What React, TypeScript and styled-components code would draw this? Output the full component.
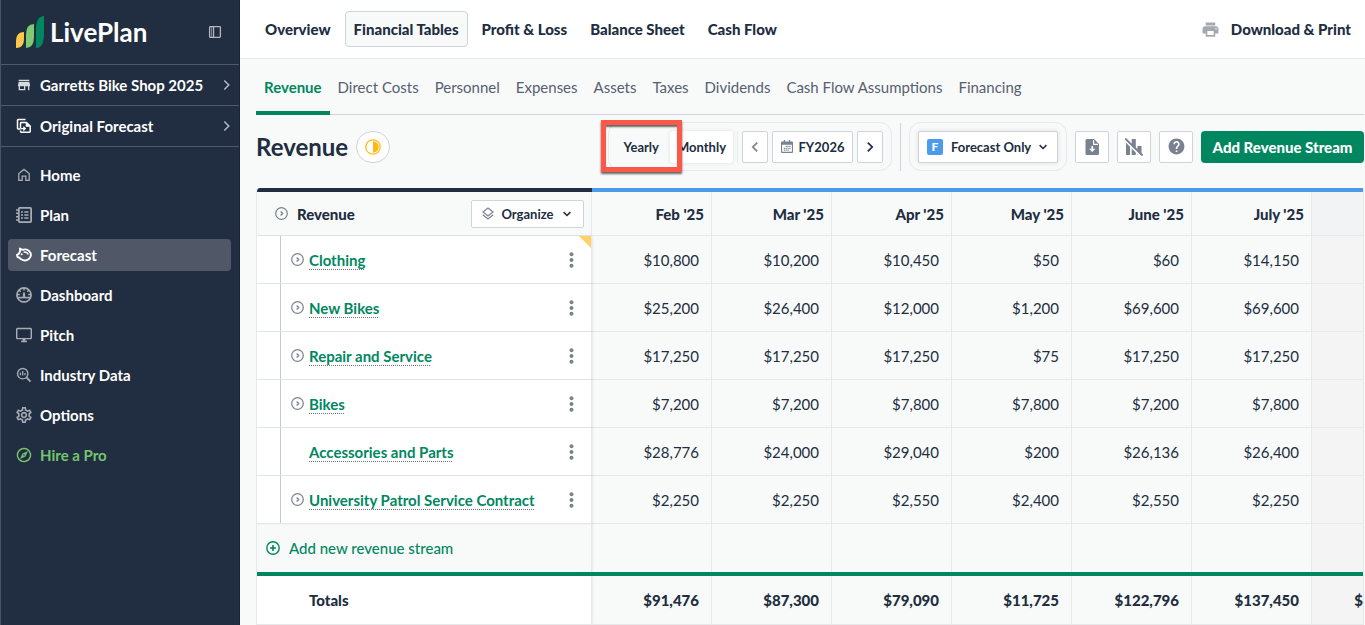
import React from "react";
import styled, { createGlobalStyle, css } from "styled-components";
import {
  MdStore,
  MdPrint,
  MdHelp,
  MdOutlineDesktopWindows,
  MdOutlineSettings,
  MdOutlineExplore,
} from "react-icons/md";

const navy = "#212d40";
const green = "#00875f";
const blue = "#4c9aec";
const page = "#f8faf9";
const line = "#e6e8ea";
const edge = "#cfd3da";
const muted = "#7a8290";

const GlobalStyle = createGlobalStyle`
  *, *::before, *::after { box-sizing: border-box; }
  body {
    margin: 0;
    background: ${page};
    color: ${navy};
    font-family: Lato, "Open Sans", sans-serif;
    font-size: 15px;
    line-height: 20px;
  }
  button, select { font: inherit; color: inherit; margin: 0; cursor: pointer; }
  a { color: inherit; text-decoration: none; }
  svg { display: block; flex: none; }
`;

const Shell = styled.div`
  display: flex;
  min-height: 100vh;
`;

/* ---------- Sidebar ---------- */

const Sidebar = styled.aside`
  flex: 0 0 240px;
  background: ${navy};
  border-left: 1px solid #485264;
  border-right: 1px solid #1a2434;
  color: #fff;
  font-weight: 700;
`;

const Brand = styled.div`
  display: flex;
  align-items: center;
  height: 64px;
  padding: 0 16px 0 15px;
`;

const BrandName = styled.span`
  flex: 1;
  margin-left: 6px;
  font-size: 26px;
  line-height: 32px;
`;

const CollapseButton = styled.button`
  padding: 0;
  border: 0;
  background: none;
  color: #b4b8c0;
`;

const Switcher = styled.a`
  display: flex;
  align-items: center;
  height: 41px;
  padding: 0 4px 0 15px;
  border-top: 1px solid #4f596a;
  span { flex: 1; margin-left: 8px; }
`;

const NavList = styled.nav`
  display: flex;
  flex-direction: column;
  gap: 8px;
  padding: 12px 8px 0 7px;
  border-top: 1px solid #4f596a;
`;

const NavItem = styled.a<{ $active?: boolean; $accent?: boolean }>`
  display: flex;
  align-items: center;
  gap: 8px;
  height: 32px;
  padding: 0 8px;
  border-radius: 4px;
  color: ${(p) => (p.$accent ? "#75c56b" : "#fff")};
  background: ${(p) => (p.$active ? "#505868" : "transparent")};
  svg { color: ${(p) => (p.$accent ? "#75c56b" : p.$active ? "#fff" : "#a6abb4")}; }
`;

/* ---------- Header ---------- */

const Content = styled.div`
  flex: 1;
  min-width: 0;
`;

const Header = styled.header`
  display: flex;
  align-items: center;
  justify-content: space-between;
  height: 59px;
  padding: 0 14px 0 16px;
  background: #fff;
  border-bottom: 1px solid ${line};
  font-weight: 900;
`;

const HeaderNav = styled.nav`
  display: flex;
  gap: 5px;
`;

const HeaderLink = styled.a<{ $active?: boolean }>`
  padding: 7px 8px;
  border: 1px solid ${(p) => (p.$active ? edge : "transparent")};
  border-radius: 4px;
  background: ${(p) => (p.$active ? page : "transparent")};
`;

const PrintLink = styled.a`
  display: flex;
  align-items: center;
  gap: 11px;
  svg { color: #a3a8b1; }
`;

const Main = styled.main`
  padding: 0 1px 0 16px;
`;

const Tabs = styled.nav`
  display: flex;
  height: 56px;
  border-bottom: 1px solid ${edge};
`;

const Tab = styled.a<{ $active?: boolean }>`
  height: 56px;
  padding: 18px 8px 0;
  color: #566070;
  ${(p) =>
    p.$active &&
    css`
      color: ${green};
      font-weight: 700;
      border-bottom: 4px solid ${green};
    `}
`;

/* ---------- Toolbar ---------- */

const TitleBar = styled.div`
  display: flex;
  align-items: center;
  justify-content: space-between;
  padding: 7px 0 17px;
`;

const TitleGroup = styled.div`
  display: flex;
  align-items: center;
  gap: 8px;
`;

const Title = styled.h1`
  margin: 0;
  font-size: 24px;
  line-height: 32px;
  font-weight: 700;
`;

const RoundButton = styled.button`
  display: grid;
  place-items: center;
  width: 34px;
  height: 32px;
  padding: 0;
  border: 1px solid ${edge};
  border-radius: 16px;
  background: #fff;
`;

const Tools = styled.div`
  display: flex;
  align-items: center;
  gap: 8px;
  font-size: 13px;
  font-weight: 700;
`;

const Group = styled.div`
  position: relative;
  display: flex;
  align-items: center;
  gap: 4px;
  height: 49px;
  padding: 0 8px;
  border: 1px solid ${line};
  border-radius: 12px;
`;

const Segment = styled.button<{ $active?: boolean }>`
  height: 32px;
  padding: 0 7px;
  border: 0;
  border-radius: 4px;
  background: ${(p) => (p.$active ? "#fff" : "transparent")};
  box-shadow: ${(p) => (p.$active ? "0 0 4px rgba(33, 45, 64, 0.12)" : "none")};
`;

const GroupRule = styled.span`
  width: 1px;
  height: 32px;
  background: ${line};
`;

const Rule = styled.span`
  width: 1px;
  height: 48px;
  background: ${edge};
`;

const BoxButton = styled.button<{ $width?: number; $soft?: boolean }>`
  display: flex;
  align-items: center;
  justify-content: center;
  gap: 6px;
  width: ${(p) => (p.$width ? `${p.$width}px` : "auto")};
  height: 32px;
  padding: 0;
  border: 1px solid ${edge};
  border-radius: 2px;
  background: #fff;
  color: ${(p) => (p.$soft ? muted : navy)};
`;

const SelectBox = styled.label`
  position: relative;
  display: flex;
  align-items: center;
  width: 140px;
  height: 32px;
  border: 1px solid ${edge};
  border-radius: 2px;
  background: #fff;
  box-shadow: 0 0 4px rgba(33, 45, 64, 0.14);
  select {
    width: 100%;
    height: 30px;
    padding: 0 24px 0 32px;
    border: 0;
    background: transparent;
    appearance: none;
  }
  svg {
    position: absolute;
    right: 8px;
    pointer-events: none;
  }
`;

const Badge = styled.span`
  position: absolute;
  left: 8px;
  width: 16px;
  height: 16px;
  border-radius: 2px;
  background: ${blue};
  color: #fff;
  font-size: 12px;
  line-height: 16px;
  font-weight: 900;
  text-align: center;
`;

const PrimaryButton = styled.button`
  width: 163px;
  height: 32px;
  padding: 0;
  border: 0;
  border-radius: 4px;
  background: ${green};
  color: #fff;
  font-size: 15px;
  font-weight: 900;
`;

const Callout = styled.div`
  position: absolute;
  left: -8px;
  top: -3px;
  width: 81px;
  height: 52px;
  border: 5px solid #fc5849;
  box-shadow: 0 2px 2px rgba(0, 0, 0, 0.6), inset 0 3px 2px -1px rgba(0, 0, 0, 0.6);
  pointer-events: none;
`;

/* ---------- Table ---------- */

const TableFrame = styled.div`
  overflow: hidden;
  border-left: 1px solid ${line};
  border-right: 1px solid ${line};
  border-top-left-radius: 4px;
`;

const Table = styled.table`
  width: 100%;
  table-layout: fixed;
  border-collapse: separate;
  border-spacing: 0;
`;

const NameCol = styled.col`
  width: 335px;
`;

const MonthCol = styled.col`
  width: 120px;
`;

const Band = styled.td<{ $color: string }>`
  height: 4px;
  padding: 0;
  background: ${(p) => p.$color};
`;

const HeadCell = styled.th`
  height: 44px;
  padding: 0 7px 0 0;
  border-bottom: 1px solid ${line};
  border-right: 1px solid ${line};
  font-weight: 900;
  text-align: right;
`;

const HeadFill = styled.td`
  border-bottom: 1px solid ${line};
  background: #f2f3f5;
`;

const HeadContent = styled.div`
  display: flex;
  align-items: center;
  gap: 9px;
  padding-left: 18px;
  span { flex: 1; text-align: left; }
`;

const OrganizeButton = styled.button`
  display: flex;
  align-items: center;
  justify-content: space-between;
  width: 113px;
  height: 28px;
  padding: 0 10px;
  border: 1px solid ${edge};
  border-radius: 2px;
  background: #fff;
  font-size: 13px;
  font-weight: 700;
`;

const NameCell = styled.th`
  position: relative;
  height: 48px;
  padding: 0;
  border-bottom: 1px solid ${line};
  border-right: 1px solid ${line};
  background: #fff;
  box-shadow: 1px 0 2px rgba(33, 45, 64, 0.08);
  text-align: left;
`;

const NameContent = styled.div`
  display: flex;
  align-items: center;
  height: 47px;
`;

const Gutter = styled.span`
  align-self: stretch;
  width: 24px;
  border-right: 1px solid #c5c8d0;
`;

const Toggle = styled.button`
  display: flex;
  align-items: center;
  width: 28px;
  height: 25px;
  padding: 0 0 0 10px;
  border: 0;
  background: none;
`;

const ToggleSpace = styled.span`
  width: 28px;
`;

const StreamLink = styled.a`
  color: ${green};
  font-weight: 700;
  text-decoration: underline dotted #697383 1px;
  text-underline-offset: 3px;
  text-decoration-skip-ink: none;
`;

const MenuButton = styled.button`
  display: flex;
  align-items: center;
  width: 24px;
  height: 24px;
  margin-left: auto;
  margin-right: 8px;
  padding: 0;
  border: 0;
  background: none;
`;

const Corner = styled.span`
  position: absolute;
  top: 0;
  right: 0;
  border-top: 12px solid #ffd166;
  border-left: 12px solid transparent;
`;

const Cell = styled.td<{ $kind?: "add" | "total" }>`
  padding: 0 12px 0 0;
  border-bottom: ${(p) => (p.$kind === "add" ? "0" : `1px solid ${line}`)};
  border-right: 1px solid ${line};
  font-weight: ${(p) => (p.$kind === "total" ? 900 : 400)};
  text-align: right;
  &:last-child { padding: 0; border-right: 0; background: #f4f4f4; }
`;

const AddCell = styled.th`
  height: 48px;
  padding: 0 0 0 9px;
  border-right: 1px solid ${line};
  box-shadow: 1px 0 2px rgba(33, 45, 64, 0.08);
`;

const AddButton = styled.button`
  display: flex;
  align-items: center;
  gap: 9px;
  padding: 0;
  border: 0;
  background: none;
  color: ${green};
  font-weight: 500;
`;

const TotalName = styled.th`
  height: 49px;
  padding: 0 0 0 52px;
  border-bottom: 1px solid ${line};
  border-right: 1px solid ${line};
  background: #fff;
  box-shadow: 1px 0 2px rgba(33, 45, 64, 0.08);
  font-weight: 900;
  text-align: left;
`;

/* ---------- Icons ---------- */

type IconProps = { size?: number; children?: React.ReactNode; width?: number };

const Stroke = ({ size = 16, width = 1.5, children }: IconProps) => (
  <svg width={size} height={size} viewBox="0 0 16 16" fill="none" stroke="currentColor" strokeWidth={width} aria-hidden="true">
    {children}
  </svg>
);

const Logo = () => (
  <svg width="28" height="32" viewBox="0 0 28 32" aria-hidden="true">
    <path d="M0 32V25Q0 16 8 16V23Q8 32 0 32Z" fill="#ffc84a" />
    <path d="M10 32V19Q10 8 18 8V21Q18 32 10 32Z" fill="#80cb72" />
    <path d="M20 32V14Q20 0 28 0V18Q28 32 20 32Z" fill="#00875f" />
  </svg>
);

const PanelIcon = () => (
  <Stroke width={1.3}>
    <rect x="2.6" y="2.6" width="10.8" height="10.8" rx="0.8" />
    <path d="M6.5 2.6V13.4" />
    <path d="M4.5 3V13" strokeWidth="0.6" />
  </Stroke>
);

const CopyIcon = () => (
  <Stroke width={1.5}>
    <path d="M4.5 11H2.2Q1.5 11 1.5 10.3V2.2Q1.5 1.5 2.2 1.5H9.5" />
    <path d="M4.5 10V5.2Q4.5 4.5 5.2 4.5H10.5L14.2 8V13.6Q14.2 14.3 13.5 14.3H5.2Q4.5 14.3 4.5 13.6V12.5" />
    <path d="M10 4.5V8.5H14Z" fill="currentColor" strokeWidth="0.6" />
    <path d="M4.5 10.6H9M7.3 8.7L9.3 10.6L7.3 12.5" strokeWidth="1.3" />
  </Stroke>
);

const HomeIcon = () => (
  <Stroke width={1.3}>
    <path d="M2.8 13.3V6.5L8 2.4L13.2 6.5V13.3H9.8V9.2H6.2V13.3Z" />
  </Stroke>
);

const PlanIcon = () => (
  <Stroke width={1.8}>
    <rect x="2.8" y="0.9" width="12.3" height="14.2" rx="0.8" />
    <path d="M0 3H3M0 6.3H3M0 9.7H3M0 13H3" strokeWidth="1.5" />
    <path d="M5 5H7M5 8H7M5 11H7M8.3 5H12.5M8.3 8H12.5M8.3 11H12.5" strokeWidth="1.5" />
  </Stroke>
);

const PiggyIcon = () => (
  <Stroke width={1.9}>
    <path d="M4.2 3.9L3.9 1.5L6.6 2.9C8.8 2.1 11.4 2.3 13.2 4.1C15.5 6.4 15.5 9.7 13.1 11.7C11 13.5 7.6 13.8 5.2 12.3L3.3 10.7L1.5 10L1 7.8L2.8 6.9Z" strokeLinejoin="round" />
    <path d="M7.6 5.4C9.6 4.6 11.5 5.6 12.2 7.6" strokeWidth="1.5" />
    <circle cx="5.7" cy="7.3" r="1" fill="currentColor" stroke="none" />
  </Stroke>
);

const GaugeIcon = () => (
  <Stroke width={1.7}>
    <circle cx="8" cy="8" r="7.1" />
    <path d="M1.2 10.6H14.8" />
    <path d="M8 5.5V10" strokeWidth="2.2" />
    <path d="M8 1V3.6M3 3L4.8 4.8M13 3L11.2 4.8M1 7.5H3.8M15 7.5H12.2" strokeWidth="1.5" />
  </Stroke>
);

const IndustryIcon = () => (
  <Stroke width={1.4}>
    <circle cx="6.7" cy="6.7" r="5.2" />
    <path d="M10.5 10.5L14.6 14.6" strokeWidth="1.8" />
    <path d="M4.4 5.6V8.2M6.7 4V8.6M9 6V8.2" strokeWidth="1.3" />
  </Stroke>
);

const Chevron = ({ dir, size = 16 }: { dir: "left" | "right" | "down"; size?: number }) => (
  <Stroke size={size} width={2}>
    <path d={{ left: "M10.5 3L5.5 8L10.5 13", right: "M5.5 3L10.5 8L5.5 13", down: "M3.5 5.5L8 10L12.5 5.5" }[dir]} />
  </Stroke>
);

const SideChevron = () => (
  <svg width="16" height="16" viewBox="0 0 16 16" fill="none" stroke="#b9bdc4" strokeWidth="1.4" aria-hidden="true">
    <path d="M5.3 3.6L9.8 8L5.3 12.4" />
  </svg>
);

const HalfIcon = () => (
  <svg width="16" height="16" viewBox="0 0 16 16" aria-hidden="true">
    <circle cx="8" cy="8" r="7.2" fill="none" stroke="#fdb913" strokeWidth="1.3" />
    <path d="M8 2.2A5.8 5.8 0 0 1 8 13.8Z" fill="#fdb913" />
  </svg>
);

const CalendarIcon = () => (
  <svg width="12" height="13" viewBox="0 0 13 14" fill={muted} aria-hidden="true">
    <path fillRule="evenodd" d="M3 0H4.5V1.5H8.5V0H10V1.5H12Q13 1.5 13 2.5V13Q13 14 12 14H1Q0 14 0 13V2.5Q0 1.5 1 1.5H3ZM1.2 5V12.8H11.8V5Z" />
    <path d="M5 6.3H6.3V7.6H5ZM7 6.3H8.3V7.6H7ZM9 6.3H10.3V7.6H9ZM3 8.3H4.3V9.6H3ZM5 8.3H6.3V9.6H5ZM7 8.3H8.3V9.6H7ZM9 8.3H10.3V9.6H9ZM3 10.3H4.3V11.6H3ZM5 10.3H6.3V11.6H5ZM7 10.3H8.3V11.6H7Z" />
  </svg>
);

const FileIcon = () => (
  <svg width="14" height="16" viewBox="0 0 14 16" aria-hidden="true">
    <path d="M2 0H9L14 5V14.5Q14 16 12.5 16H2Q.5 16 .5 14.5V1.5Q.5 0 2 0Z" fill={muted} />
    <path d="M8.6 1V5.4H13" fill="none" stroke="#fff" strokeWidth="1.1" />
    <path d="M6.4 7H8.1V9.8H10.4L7.2 13L4 9.8H6.4Z" fill="#fff" />
  </svg>
);

const ChartOffIcon = () => (
  <svg width="18" height="18" viewBox="0 0 18 18" aria-hidden="true">
    <path d="M1 5H5V17H1ZM6.7 1H10.8V17H6.7ZM12.4 8H16.5V17H12.4Z" fill={muted} />
    <path d="M0 2.6L16.5 19" stroke="#fff" strokeWidth="1.8" />
    <path d="M0 0.4L17.6 17.4" stroke={muted} strokeWidth="2" />
  </svg>
);

const LayersIcon = () => (
  <svg width="12" height="13" viewBox="0 0 12 13" fill="none" stroke={muted} strokeWidth="1.2" aria-hidden="true">
    <path d="M6 1L11 5L6 9L1 5Z" />
    <path d="M0.8 7.8L6 12L11.2 7.8" />
  </svg>
);

const CircleChevron = () => (
  <svg width="13" height="13" viewBox="0 0 13 13" fill="none" stroke={muted} aria-hidden="true">
    <circle cx="6.5" cy="6.5" r="5.8" strokeWidth="1.2" />
    <path d="M5.6 4.5L7.7 6.5L5.6 8.5" strokeWidth="1.3" />
  </svg>
);

const PlusCircle = () => (
  <svg width="14" height="14" viewBox="0 0 14 14" fill="none" stroke={green} strokeWidth="1.4" aria-hidden="true">
    <circle cx="7" cy="7" r="6.2" />
    <path d="M7 4V10M4 7H10" strokeWidth="1.6" />
  </svg>
);

const Dots = () => (
  <svg width="24" height="16" viewBox="0 0 24 16" fill={muted} aria-hidden="true">
    <circle cx="12.5" cy="2.2" r="2" />
    <circle cx="12.5" cy="8" r="2" />
    <circle cx="12.5" cy="13.8" r="2" />
  </svg>
);

/* ---------- Data ---------- */

const months = ["Feb '25", "Mar '25", "Apr '25", "May '25", "June '25", "July '25"];

const streams = [
  { name: "Clothing", nested: true, flagged: true, values: ["$10,800", "$10,200", "$10,450", "$50", "$60", "$14,150"] },
  { name: "New Bikes", nested: true, values: ["$25,200", "$26,400", "$12,000", "$1,200", "$69,600", "$69,600"] },
  { name: "Repair and Service", nested: true, values: ["$17,250", "$17,250", "$17,250", "$75", "$17,250", "$17,250"] },
  { name: "Bikes", nested: true, values: ["$7,200", "$7,200", "$7,800", "$7,800", "$7,200", "$7,800"] },
  { name: "Accessories and Parts", values: ["$28,776", "$24,000", "$29,040", "$200", "$26,136", "$26,400"] },
  { name: "University Patrol Service Contract", nested: true, values: ["$2,250", "$2,250", "$2,550", "$2,400", "$2,550", "$2,250"] },
];

const totals = ["$91,476", "$87,300", "$79,090", "$11,725", "$122,796", "$137,450"];

const navItems = [
  { label: "Home", icon: <HomeIcon /> },
  { label: "Plan", icon: <PlanIcon /> },
  { label: "Forecast", icon: <PiggyIcon />, active: true },
  { label: "Dashboard", icon: <GaugeIcon /> },
  { label: "Pitch", icon: <MdOutlineDesktopWindows size={16} viewBox="1 1 22 22" /> },
  { label: "Industry Data", icon: <IndustryIcon /> },
  { label: "Options", icon: <MdOutlineSettings size={16} viewBox="2 2 20 20" /> },
  { label: "Hire a Pro", icon: <MdOutlineExplore size={16} viewBox="1 1 22 22" />, accent: true },
];

const sections = ["Overview", "Financial Tables", "Profit & Loss", "Balance Sheet", "Cash Flow"];
const tabs = ["Revenue", "Direct Costs", "Personnel", "Expenses", "Assets", "Taxes", "Dividends", "Cash Flow Assumptions", "Financing"];

export default function App() {
  return (
    <Shell>
      <GlobalStyle />
      <Sidebar>
        <Brand>
          <Logo />
          <BrandName>LivePlan</BrandName>
          <CollapseButton aria-label="Collapse sidebar"><PanelIcon /></CollapseButton>
        </Brand>
        <Switcher href="#company">
          <MdStore size={16} color="#d5d8dc" />
          <span>Garretts Bike Shop 2025</span>
          <SideChevron />
        </Switcher>
        <Switcher href="#scenario">
          <CopyIcon />
          <span>Original Forecast</span>
          <SideChevron />
        </Switcher>
        <NavList>
          {navItems.map((item) => (
            <NavItem key={item.label} href="#nav" $active={item.active} $accent={item.accent}>
              {item.icon}
              {item.label}
            </NavItem>
          ))}
        </NavList>
      </Sidebar>

      <Content>
        <Header>
          <HeaderNav>
            {sections.map((label) => (
              <HeaderLink key={label} href="#section" $active={label === "Financial Tables"}>{label}</HeaderLink>
            ))}
          </HeaderNav>
          <PrintLink href="#print"><MdPrint size={19} />Download &amp; Print</PrintLink>
        </Header>

        <Main>
          <Tabs>
            {tabs.map((label) => (
              <Tab key={label} href="#tab" $active={label === "Revenue"}>{label}</Tab>
            ))}
          </Tabs>

          <TitleBar>
            <TitleGroup>
              <Title>Revenue</Title>
              <RoundButton aria-label="Progress"><HalfIcon /></RoundButton>
            </TitleGroup>
            <Tools>
              <Group>
                <Segment aria-pressed="false">Yearly</Segment>
                <Segment aria-pressed="true" $active>Monthly</Segment>
                <GroupRule />
                <BoxButton $width={26} $soft aria-label="Previous year"><Chevron dir="left" size={14} /></BoxButton>
                <BoxButton $width={81}><CalendarIcon />FY2026</BoxButton>
                <BoxButton $width={26} aria-label="Next year"><Chevron dir="right" size={14} /></BoxButton>
                <Callout />
              </Group>
              <Rule />
              <Group>
                <SelectBox>
                  <Badge aria-hidden="true">F</Badge>
                  <select aria-label="View" defaultValue="Forecast Only">
                    <option>Forecast Only</option>
                  </select>
                  <Chevron dir="down" size={12} />
                </SelectBox>
              </Group>
              <BoxButton $width={34} aria-label="Export"><FileIcon /></BoxButton>
              <BoxButton $width={34} aria-label="Hide chart"><ChartOffIcon /></BoxButton>
              <BoxButton $width={34} aria-label="Help"><MdHelp size={19} color={muted} /></BoxButton>
              <PrimaryButton>Add Revenue Stream</PrimaryButton>
            </Tools>
          </TitleBar>

          <TableFrame>
            <Table>
              <colgroup>
                <NameCol />
                {months.map((m) => <MonthCol key={m} />)}
                <col />
              </colgroup>
              <thead>
                <tr>
                  <Band $color={navy} />
                  <Band $color={blue} colSpan={7} />
                </tr>
                <tr>
                  <HeadCell scope="col">
                    <HeadContent>
                      <CircleChevron />
                      <span>Revenue</span>
                      <OrganizeButton><LayersIcon />Organize<Chevron dir="down" size={12} /></OrganizeButton>
                    </HeadContent>
                  </HeadCell>
                  {months.map((m) => <HeadCell key={m} scope="col">{m}</HeadCell>)}
                  <HeadFill />
                </tr>
              </thead>
              <tbody>
                {streams.map((s) => (
                  <tr key={s.name}>
                    <NameCell scope="row">
                      <NameContent>
                        <Gutter />
                        {s.nested ? <Toggle aria-label={`Expand ${s.name}`}><CircleChevron /></Toggle> : <ToggleSpace />}
                        <StreamLink href="#stream">{s.name}</StreamLink>
                        <MenuButton aria-label={`Options for ${s.name}`}><Dots /></MenuButton>
                      </NameContent>
                      {s.flagged && <Corner />}
                    </NameCell>
                    {s.values.map((v, i) => <Cell key={i}>{v}</Cell>)}
                    <Cell />
                  </tr>
                ))}
                <tr>
                  <AddCell><AddButton><PlusCircle />Add new revenue stream</AddButton></AddCell>
                  {months.map((m) => <Cell key={m} $kind="add" />)}
                  <Cell $kind="add" />
                </tr>
              </tbody>
              <tfoot>
                <tr>
                  <Band $color={green} colSpan={8} />
                </tr>
                <tr>
                  <TotalName scope="row">Totals</TotalName>
                  {totals.map((v, i) => <Cell key={i} $kind="total">{v}</Cell>)}
                  <Cell $kind="total">$</Cell>
                </tr>
              </tfoot>
            </Table>
          </TableFrame>
        </Main>
      </Content>
    </Shell>
  );
}
